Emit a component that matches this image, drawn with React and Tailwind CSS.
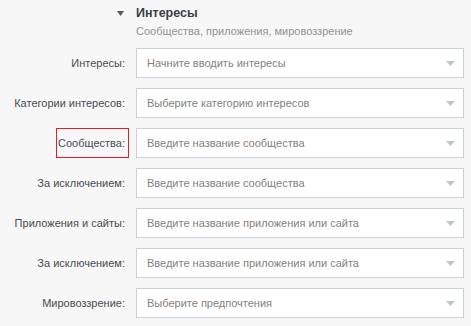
export default function App() {
  const rows = [
    ["Интересы:", "Начните вводить интересы", false],
    ["Категории интересов:", "Выберите категорию интересов", false],
    ["Сообщества:", "Введите название сообщества", true],
    ["За исключением:", "Введите название сообщества", false],
    ["Приложения и сайты:", "Введите название приложения или сайта", false],
    ["За исключением:", "Введите название приложения или сайта", false],
    ["Мировоззрение:", "Выберите предпочтения", false],
  ];
  return (
    <div
      className="w-[471px] h-[326px] bg-[#f7f7f7] overflow-hidden"
      style={{ fontFamily: '"Liberation Sans", Arial, sans-serif' }}
    >
      <div className="flex items-center pt-[4px] h-[22px]">
        <div className="w-[117px]" />
        <svg width="7" height="5" viewBox="0 0 7 5" className="mr-[12px]">
          <path d="M0 0 L7 0 L3.5 5 Z" fill="#555a60" />
        </svg>
        <span className="text-[12.5px] font-bold text-[#3c3f44]">Интересы</span>
      </div>
      <div className="pl-[136px] mt-[2px] text-[11px] leading-[14px] text-[#939393]">
        Сообщества, приложения, мировоззрение
      </div>
      <div className="flex flex-col gap-[10px] mt-[10px]">
        {rows.map(([label, ph, hl], i) => (
          <div key={i} className="flex items-center h-[30px]">
            <div className="w-[125px] flex justify-end">
              {hl ? (
                <div className="h-[30px] w-[73px] border border-[#e31e24] flex items-center justify-end pr-[3px] -mr-[4px] text-[11px] text-[#4a4c50]">
                  {label}
                </div>
              ) : (
                <span className="text-[11px] text-[#4a4c50]">{label}</span>
              )}
            </div>
            <div className="ml-[11px] w-[328px] h-[30px] border border-[#c9d0d8] bg-white flex items-center pl-[10px] pr-[8px]">
              <span className="flex-1 text-[11px] text-[#828282]">{ph}</span>
              <svg width="9" height="5" viewBox="0 0 9 5">
                <path d="M0 0 L9 0 L4.5 5 Z" fill="#c0c6cd" />
              </svg>
            </div>
          </div>
        ))}
      </div>
    </div>
  );
}
